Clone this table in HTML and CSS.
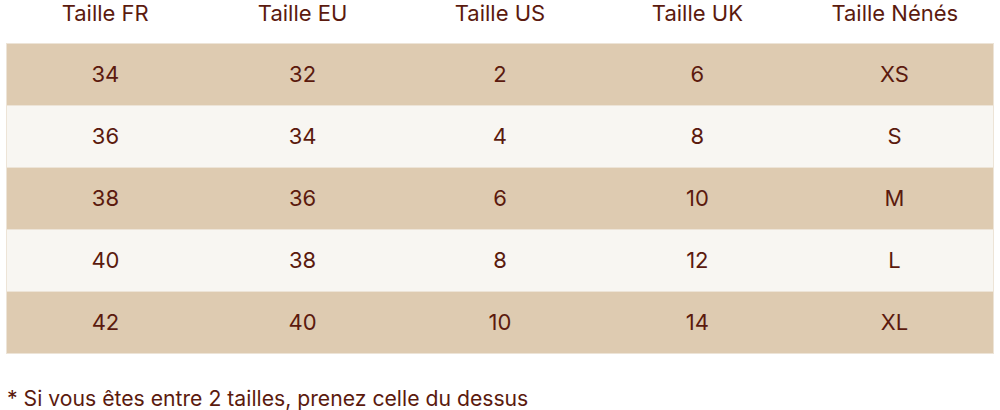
FILE: index.html
```html
<!DOCTYPE html>
<html lang="fr">
<head>
<meta charset="utf-8">
<link rel="stylesheet" href="styles.css">
</head>
<body>
<div class="wrap">
<table class="sizes">
<thead>
<tr><th>Taille FR</th><th>Taille EU</th><th>Taille US</th><th>Taille UK</th><th>Taille Nénés</th></tr>
</thead>
<tbody>
<tr class="dark"><td>34</td><td>32</td><td>2</td><td>6</td><td>XS</td></tr>
<tr class="light"><td>36</td><td>34</td><td>4</td><td>8</td><td>S</td></tr>
<tr class="dark"><td>38</td><td>36</td><td>6</td><td>10</td><td>M</td></tr>
<tr class="light"><td>40</td><td>38</td><td>8</td><td>12</td><td>L</td></tr>
<tr class="dark"><td>42</td><td>40</td><td>10</td><td>14</td><td>XL</td></tr>
</tbody>
</table>
<p class="note">* Si vous êtes entre 2 tailles, prenez celle du dessus</p>
</div>
</body>
</html>
```

FILE: styles.css
```css
html, body {
  margin: 0;
  padding: 0;
  background: #ffffff;
}
body {
  font-family: Inter, "Noto Sans", sans-serif;
  color: #5b1a0e;
}
.wrap {
  padding: 0 6px;
}
.sizes {
  width: 988px;
  border-collapse: collapse;
  table-layout: fixed;
}
.sizes th {
  font-weight: 400;
  font-size: 22px;
  line-height: 27px;
  padding: 0 0 16px;
  text-align: center;
}
.sizes td {
  font-size: 22px;
  line-height: 27px;
  height: 62px;
  padding: 0;
  text-align: center;
  border-top: 1px solid #ede4d7;
  border-bottom: 1px solid #ede4d7;
  box-sizing: border-box;
}
.sizes td:first-child {
  border-left: 1px solid #ede4d7;
}
.sizes td:last-child {
  border-right: 1px solid #ede4d7;
}
.dark td {
  background: #decbb1;
}
.light td {
  background: #f8f6f2;
}
.note {
  margin: 31px 0 0;
  font-size: 21.2px;
  line-height: 27px;
  padding-left: 1px;
}
```
